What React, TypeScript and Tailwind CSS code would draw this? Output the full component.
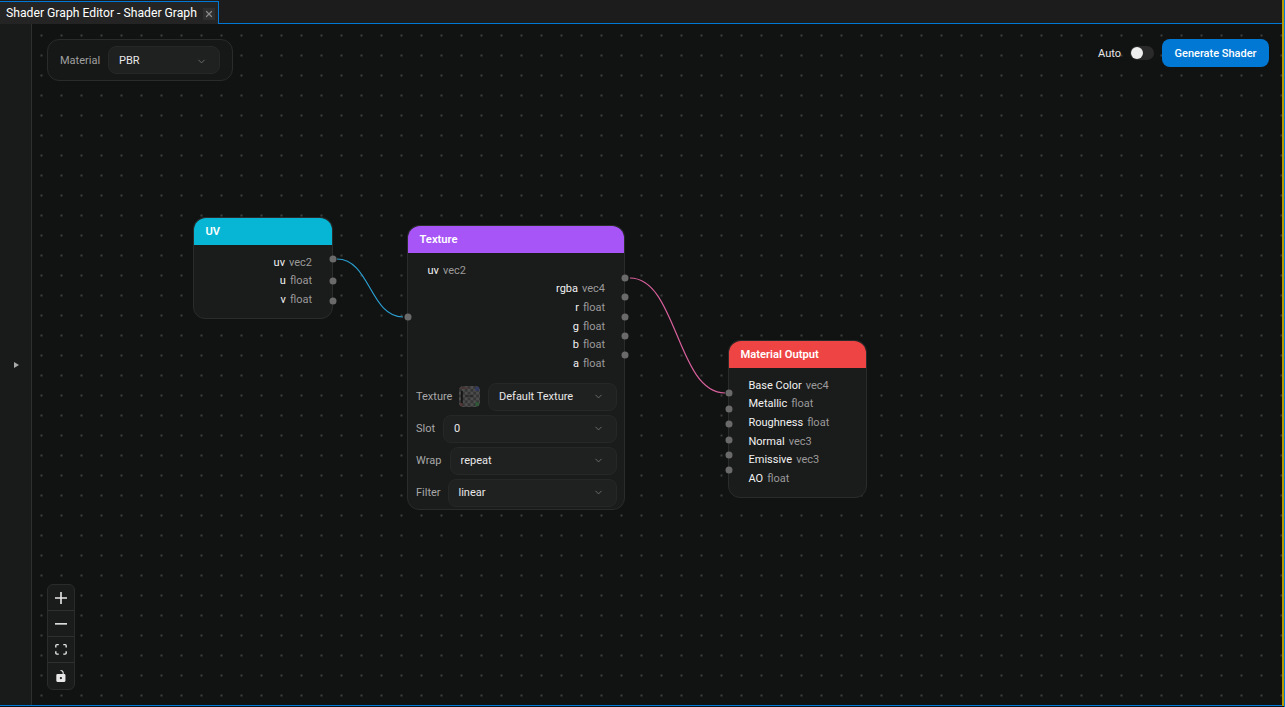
import { ChevronDown, X } from 'lucide-react';

type Row = { name: string; type: string };

const font = "font-['Roboto','Noto_Sans',sans-serif]";

function Select({ value, className }: { value: string; className: string }) {
  return (
    <div className={`flex h-7 items-center justify-between rounded-lg border border-[#262727] bg-[#1f2020] pl-[10px] pr-[12px] text-[11px] text-[#e8e8e8] ${className}`}>
      <span>{value}</span>
      <ChevronDown size={11} strokeWidth={1.5} className="text-[#8a8a8a]" />
    </div>
  );
}

function Handle({ className }: { className: string }) {
  return <div className={`absolute h-[7px] w-[7px] -translate-x-1/2 -translate-y-1/2 rounded-full bg-[#6a6a6a] ${className}`} />;
}

function Rows({ rows, right }: { rows: Row[]; right?: boolean }) {
  return (
    <>
      {rows.map((r) => (
        <div key={r.name} className={`h-[18.67px] whitespace-nowrap text-[11px] leading-[18.67px] ${right ? 'pr-5 text-right' : 'pl-[19.5px] text-left'}`}>
          <span className="text-[#f2f2f2]">{r.name}</span>
          <span className="ml-1 text-[#9a9a9a]">{r.type}</span>
        </div>
      ))}
    </>
  );
}

function Node({ title, color, className, children }: { title: string; color: string; className: string; children: React.ReactNode }) {
  return (
    <div className={`absolute rounded-xl border border-[#2a2b2b] bg-[#1a1b1b] ${className}`}>
      <div className={`flex h-[27px] items-center rounded-t-xl pl-[11.5px] pt-px text-[11.2px] font-semibold text-white ${color}`}>{title}</div>
      {children}
    </div>
  );
}

function ControlRow({ label, labelWidth, children }: { label: string; labelWidth: string; children: React.ReactNode }) {
  return (
    <div className="flex h-7 items-center gap-2">
      <span className={`text-[11px] text-[#a8a8a8] ${labelWidth}`}>{label}</span>
      {children}
    </div>
  );
}

function TextureThumb() {
  return (
    <svg width="21" height="21" viewBox="0 0 22 22" className="shrink-0 rounded opacity-80">
      <defs>
        <pattern id="checker" width="6" height="6" patternUnits="userSpaceOnUse">
          <rect width="6" height="6" fill="#3c3c3c" />
          <rect width="3" height="3" fill="#5a5a5a" />
          <rect x="3" y="3" width="3" height="3" fill="#5a5a5a" />
        </pattern>
      </defs>
      <rect width="22" height="22" rx="4" fill="url(#checker)" />
      <rect x="2" y="5" width="2" height="13" fill="#151515" />
      <rect x="7" y="10" width="8" height="1" fill="#1e1e1e" />
      <rect x="1" y="1" width="9" height="2" fill="#5a3a3a" opacity="0.7" />
      <rect x="17" y="1" width="4" height="4" fill="#34407a" opacity="0.8" />
      <rect x="17" y="17" width="4" height="4" fill="#2f6a3a" opacity="0.8" />
      <rect x="1" y="18" width="3" height="3" fill="#6a3030" opacity="0.6" />
    </svg>
  );
}

function ZoomButton({ last, children }: { last?: boolean; children: React.ReactNode }) {
  return (
    <div className={`flex h-[26px] w-[26px] items-center justify-center ${last ? '' : 'border-b border-[#2f3030]'}`}>
      {children}
    </div>
  );
}

export default function App() {
  return (
    <div className={`h-[707px] w-[1285px] overflow-hidden border-r border-[#0078d4] bg-[#111212] ${font}`}>
      <div className="flex h-[706px] flex-col border-r-2 border-[#b59a00]">
        {/* tab strip */}
        <div className="flex h-6 shrink-0 border-b border-[#0078d4] bg-[#1c1c1c]">
          <div className="mt-px -mb-px flex h-6 w-[219px] items-center border-r border-t border-[#0078d4] bg-[#242424] pl-[6px] text-[12.2px] text-white">
            <span className="whitespace-nowrap">Shader Graph Editor - Shader Graph</span>
            <span className="ml-auto mr-[3px] flex h-3 w-3 items-center justify-center bg-[#2f2f2f]">
              <X size={10} strokeWidth={3} className="text-[#8a8a8a]" />
            </span>
          </div>
        </div>

        <div className="flex min-h-0 flex-1 border-b border-[#0078d4]">
          {/* collapsed sidebar */}
          <div className="flex w-8 shrink-0 items-center justify-center border-r border-[#2e2f2f] bg-[#191b1b]">
            <div className="ml-[2px] h-0 w-0 border-y-[3.5px] border-l-[5px] border-y-transparent border-l-[#aaaaaa]" />
          </div>

          {/* graph canvas */}
          <div className="relative flex-1 bg-[#111212] bg-[radial-gradient(#8a8a8a_0.55px,transparent_0.8px)] bg-[size:20px_20px] bg-[position:-0.5px_1.5px]">
            <svg className="pointer-events-none absolute inset-0 h-full w-full" fill="none">
              <path d="M305 235 C338 235 338 293 371 293" stroke="#2a9fd0" strokeWidth="1.2" />
              <path d="M598 254 C645 254 645 369 693 369" stroke="#d8609c" strokeWidth="1.2" />
            </svg>

            {/* material picker */}
            <div className="absolute left-[15px] top-[15px] flex h-[42px] w-[186px] items-center gap-2 rounded-xl border border-[#2a2b2b] bg-[#161717] pl-3 pr-3">
              <span className="w-10 pt-[2px] text-[11px] text-[#a0a0a0]">Material</span>
              <Select value="PBR" className="w-28 pt-[2px]" />
            </div>

            {/* generate controls */}
            <div className="absolute right-[13px] top-[15px] flex h-7 items-center gap-2">
              <span className="pt-[2px] text-[11px] text-[#e8e8e8]">Auto</span>
              <div className="ml-px flex h-[14px] w-6 items-center rounded-full bg-[#2a2a2a] pl-px">
                <div className="h-3 w-3 rounded-full bg-[#f0f0f0]" />
              </div>
              <div className="flex h-7 w-[107px] items-center justify-center rounded-lg bg-[#0078d4] pt-[2px] text-[11px] font-medium text-white">
                Generate Shader
              </div>
            </div>

            <Node title="UV" color="bg-[#06b6d4]" className="left-[161px] top-[193px] w-[140px]">
              <div className="pb-[8px] pt-[8.6px]">
                <Rows right rows={[{ name: 'uv', type: 'vec2' }, { name: 'u', type: 'float' }, { name: 'v', type: 'float' }]} />
              </div>
              <Handle className="left-[139px] top-[41px]" />
              <Handle className="left-[139px] top-[63px]" />
              <Handle className="left-[139px] top-[83px]" />
            </Node>

            <Node title="Texture" color="bg-[#a855f7]" className="left-[375px] top-[201px] w-[218px]">
              <div className="-mr-px pt-[8.6px]">
                <Rows rows={[{ name: 'uv', type: 'vec2' }]} />
                <Rows right rows={[
                  { name: 'rgba', type: 'vec4' },
                  { name: 'r', type: 'float' },
                  { name: 'g', type: 'float' },
                  { name: 'b', type: 'float' },
                  { name: 'a', type: 'float' },
                ]} />
              </div>
              <div className="flex flex-col gap-1 pb-[2px] pl-2 pr-[7px] pt-[9.4px]">
                <ControlRow label="Texture" labelWidth="w-[35px]">
                  <TextureThumb />
                  <Select value="Default Texture" className="flex-1" />
                </ControlRow>
                <ControlRow label="Slot" labelWidth="w-[19px]"><Select value="0" className="flex-1" /></ControlRow>
                <ControlRow label="Wrap" labelWidth="w-[25.5px]"><Select value="repeat" className="flex-1" /></ControlRow>
                <ControlRow label="Filter" labelWidth="w-[23.5px]"><Select value="linear" className="flex-1" /></ControlRow>
              </div>
              <Handle className="left-0 top-[91px]" />
              <Handle className="left-[217px] top-[52px]" />
              <Handle className="left-[217px] top-[71px]" />
              <Handle className="left-[217px] top-[91px]" />
              <Handle className="left-[217px] top-[110px]" />
              <Handle className="left-[217px] top-[129px]" />
            </Node>

            <Node title="Material Output" color="bg-[#ef4444]" className="left-[696px] top-[316px] w-[139px]">
              <div className="pb-[8px] pt-[8.6px]">
                <Rows rows={[
                  { name: 'Base Color', type: 'vec4' },
                  { name: 'Metallic', type: 'float' },
                  { name: 'Roughness', type: 'float' },
                  { name: 'Normal', type: 'vec3' },
                  { name: 'Emissive', type: 'vec3' },
                  { name: 'AO', type: 'float' },
                ]} />
              </div>
              <Handle className="left-0 top-[52px]" />
              <Handle className="left-0 top-[68px]" />
              <Handle className="left-0 top-[83px]" />
              <Handle className="left-0 top-[99px]" />
              <Handle className="left-0 top-[114px]" />
              <Handle className="left-0 top-[129px]" />
            </Node>

            {/* zoom controls */}
            <div className="absolute left-[15px] top-[560px] w-7 rounded-md border border-[#2a2b2b] bg-[#1a1b1b]">
              <ZoomButton>
                <svg width="12" height="12" viewBox="0 0 32 32" fill="#e8e8e8"><path d="M32 18.133H18.133V32h-4.266V18.133H0v-4.266h13.867V0h4.266v13.867H32z" /></svg>
              </ZoomButton>
              <ZoomButton>
                <svg width="12" height="2" viewBox="0 0 32 5" fill="#e8e8e8"><path d="M0 0h32v4.2H0z" /></svg>
              </ZoomButton>
              <ZoomButton>
                <svg width="12" height="11" viewBox="0 0 32 30" fill="#e8e8e8"><path d="M3.692 4.63c0-.53.4-.938.939-.938h5.215V0H4.708C2.13 0 0 2.054 0 4.63v5.216h3.692V4.631zM27.354 0h-5.2v3.692h5.17c.53 0 .984.4.984.939v5.215H32V4.631A4.624 4.624 0 0027.354 0zm.954 24.83c0 .532-.4.94-.939.94h-5.215v3.768h5.215c2.577 0 4.631-2.13 4.631-4.707v-5.139h-3.692v5.139zm-23.677.94c-.531 0-.939-.4-.939-.94v-5.138H0v5.139c0 2.577 2.13 4.707 4.708 4.707h5.138V25.77H4.631z" /></svg>
              </ZoomButton>
              <ZoomButton last>
                <svg width="10" height="12" viewBox="0 0 25 32" fill="#e8e8e8"><path d="M21.333 10.667H19.81V7.619C19.81 3.429 16.38 0 12.19 0c-4.114 1.828-1.37 2.133.305 2.438 1.676.305 4.42 2.59 4.42 5.181v3.048H3.047A3.056 3.056 0 000 13.714v15.238A3.056 3.056 0 003.048 32h18.285a3.056 3.056 0 003.048-3.048V13.714a3.056 3.056 0 00-3.048-3.047zM12.19 24.533a3.056 3.056 0 01-3.047-3.047 3.056 3.056 0 013.047-3.048 3.056 3.056 0 013.048 3.048 3.056 3.056 0 01-3.048 3.047z" /></svg>
              </ZoomButton>
            </div>
          </div>
        </div>
      </div>
    </div>
  );
}
